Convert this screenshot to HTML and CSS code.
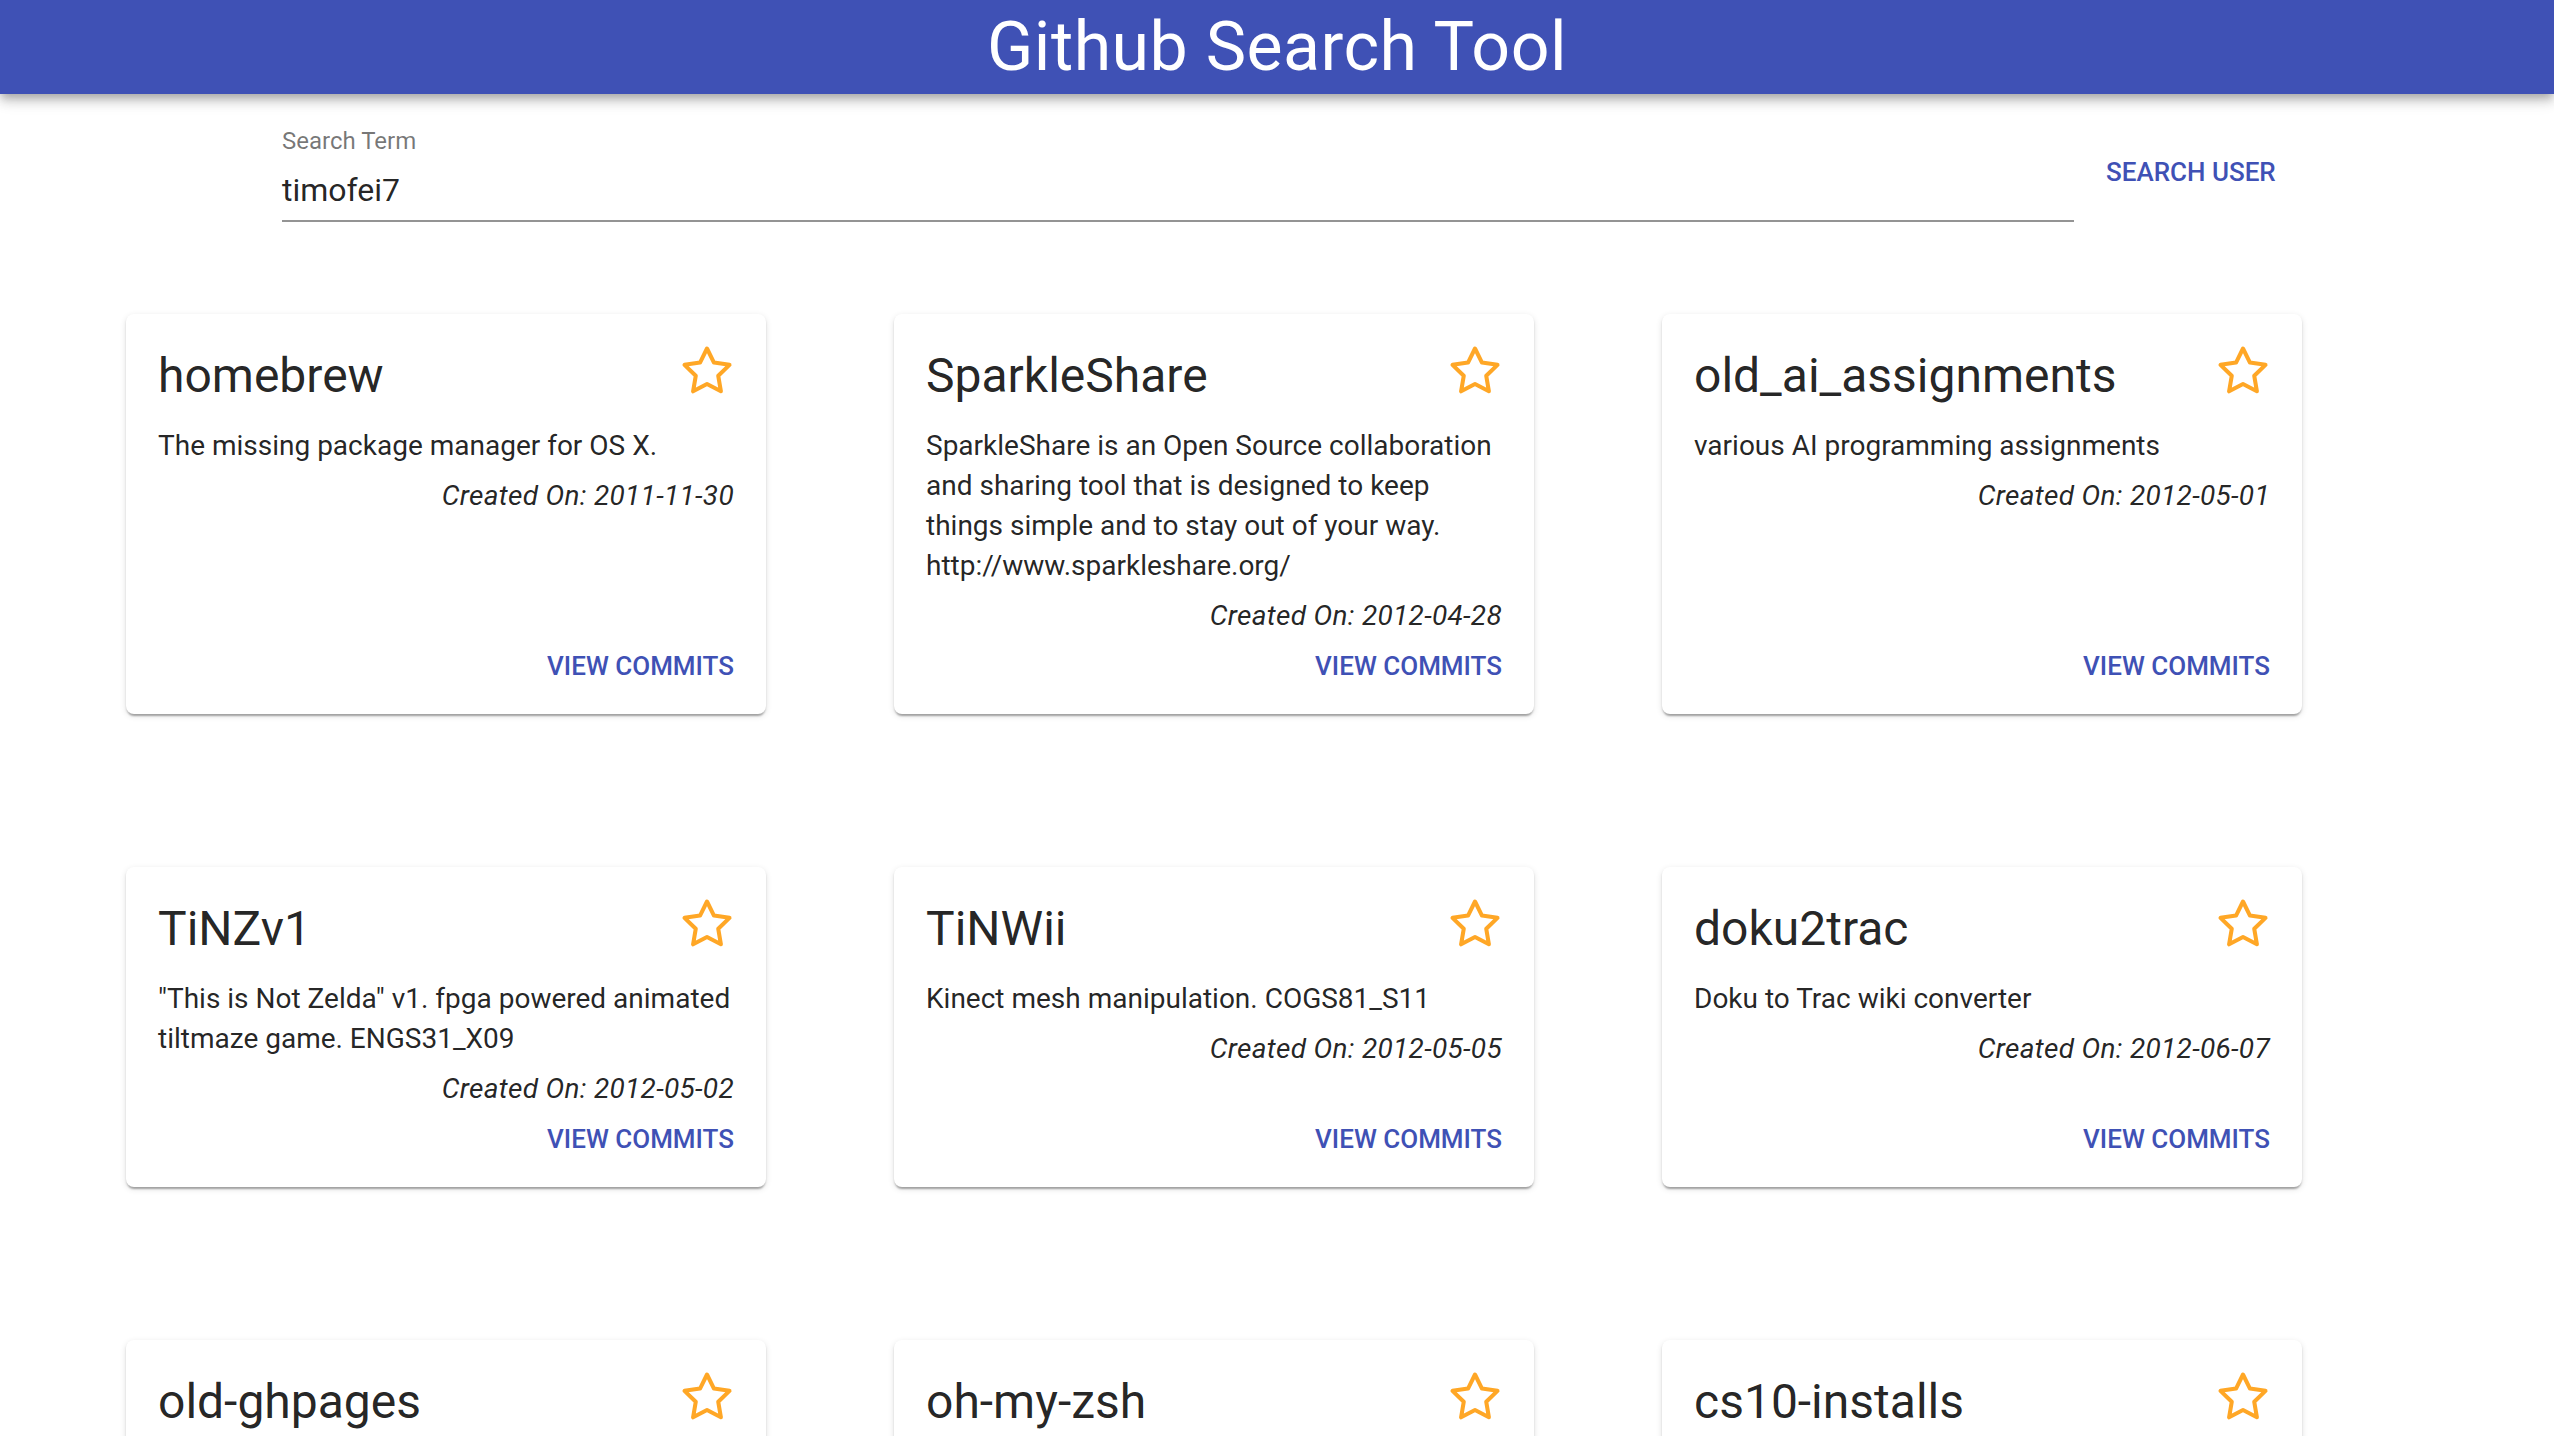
FILE: index.html
```html
<!DOCTYPE html>
<html lang="en">
<head>
<meta charset="utf-8">
<title>Github Search Tool</title>
<link rel="stylesheet" href="styles.css">
</head>
<body>
<header class="appbar">
  <h1 class="app-title">Github Search Tool</h1>
</header>
<main class="page">
  <div class="search-row">
    <div class="field">
      <label class="field-label">Search Term</label>
      <div class="field-input">timofei7</div>
    </div>
    <button class="text-btn search-btn">SEARCH USER</button>
  </div>

  <div class="grid">
    <div class="card">
      <div class="card-content">
        <div class="card-head"><h2 class="card-title">homebrew</h2><svg class="star" viewBox="0 0 24 24"><polygon points="12 2 15.09 8.26 22 9.27 17 14.14 18.18 21.02 12 17.77 5.82 21.02 7 14.14 2 9.27 8.91 8.26 12 2"/></svg></div>
        <p class="card-desc">The missing package manager for OS X.</p>
        <p class="card-date">Created On: 2011-11-30</p>
      </div>
      <div class="card-actions"><button class="text-btn">VIEW COMMITS</button></div>
    </div>
    <div class="card">
      <div class="card-content">
        <div class="card-head"><h2 class="card-title">SparkleShare</h2><svg class="star" viewBox="0 0 24 24"><polygon points="12 2 15.09 8.26 22 9.27 17 14.14 18.18 21.02 12 17.77 5.82 21.02 7 14.14 2 9.27 8.91 8.26 12 2"/></svg></div>
        <p class="card-desc">SparkleShare is an Open Source collaboration and sharing tool that is designed to keep things simple and to stay out of your way. http://www.sparkleshare.org/</p>
        <p class="card-date">Created On: 2012-04-28</p>
      </div>
      <div class="card-actions"><button class="text-btn">VIEW COMMITS</button></div>
    </div>
    <div class="card">
      <div class="card-content">
        <div class="card-head"><h2 class="card-title">old_ai_assignments</h2><svg class="star" viewBox="0 0 24 24"><polygon points="12 2 15.09 8.26 22 9.27 17 14.14 18.18 21.02 12 17.77 5.82 21.02 7 14.14 2 9.27 8.91 8.26 12 2"/></svg></div>
        <p class="card-desc">various AI programming assignments</p>
        <p class="card-date">Created On: 2012-05-01</p>
      </div>
      <div class="card-actions"><button class="text-btn">VIEW COMMITS</button></div>
    </div>

    <div class="card">
      <div class="card-content">
        <div class="card-head"><h2 class="card-title">TiNZv1</h2><svg class="star" viewBox="0 0 24 24"><polygon points="12 2 15.09 8.26 22 9.27 17 14.14 18.18 21.02 12 17.77 5.82 21.02 7 14.14 2 9.27 8.91 8.26 12 2"/></svg></div>
        <p class="card-desc">"This is Not Zelda" v1. fpga powered animated tiltmaze game. ENGS31_X09</p>
        <p class="card-date">Created On: 2012-05-02</p>
      </div>
      <div class="card-actions"><button class="text-btn">VIEW COMMITS</button></div>
    </div>
    <div class="card">
      <div class="card-content">
        <div class="card-head"><h2 class="card-title">TiNWii</h2><svg class="star" viewBox="0 0 24 24"><polygon points="12 2 15.09 8.26 22 9.27 17 14.14 18.18 21.02 12 17.77 5.82 21.02 7 14.14 2 9.27 8.91 8.26 12 2"/></svg></div>
        <p class="card-desc">Kinect mesh manipulation. COGS81_S11</p>
        <p class="card-date">Created On: 2012-05-05</p>
      </div>
      <div class="card-actions"><button class="text-btn">VIEW COMMITS</button></div>
    </div>
    <div class="card">
      <div class="card-content">
        <div class="card-head"><h2 class="card-title">doku2trac</h2><svg class="star" viewBox="0 0 24 24"><polygon points="12 2 15.09 8.26 22 9.27 17 14.14 18.18 21.02 12 17.77 5.82 21.02 7 14.14 2 9.27 8.91 8.26 12 2"/></svg></div>
        <p class="card-desc">Doku to Trac wiki converter</p>
        <p class="card-date">Created On: 2012-06-07</p>
      </div>
      <div class="card-actions"><button class="text-btn">VIEW COMMITS</button></div>
    </div>

    <div class="card">
      <div class="card-content">
        <div class="card-head"><h2 class="card-title">old-ghpages</h2><svg class="star" viewBox="0 0 24 24"><polygon points="12 2 15.09 8.26 22 9.27 17 14.14 18.18 21.02 12 17.77 5.82 21.02 7 14.14 2 9.27 8.91 8.26 12 2"/></svg></div>
        <p class="card-desc">My old github pages site</p>
        <p class="card-date">Created On: 2012-06-20</p>
      </div>
      <div class="card-actions"><button class="text-btn">VIEW COMMITS</button></div>
    </div>
    <div class="card">
      <div class="card-content">
        <div class="card-head"><h2 class="card-title">oh-my-zsh</h2><svg class="star" viewBox="0 0 24 24"><polygon points="12 2 15.09 8.26 22 9.27 17 14.14 18.18 21.02 12 17.77 5.82 21.02 7 14.14 2 9.27 8.91 8.26 12 2"/></svg></div>
        <p class="card-desc">A community-driven framework for managing your zsh configuration.</p>
        <p class="card-date">Created On: 2012-07-10</p>
      </div>
      <div class="card-actions"><button class="text-btn">VIEW COMMITS</button></div>
    </div>
    <div class="card">
      <div class="card-content">
        <div class="card-head"><h2 class="card-title">cs10-installs</h2><svg class="star" viewBox="0 0 24 24"><polygon points="12 2 15.09 8.26 22 9.27 17 14.14 18.18 21.02 12 17.77 5.82 21.02 7 14.14 2 9.27 8.91 8.26 12 2"/></svg></div>
        <p class="card-desc">Install scripts for cs10</p>
        <p class="card-date">Created On: 2012-09-12</p>
      </div>
      <div class="card-actions"><button class="text-btn">VIEW COMMITS</button></div>
    </div>
  </div>
</main>
</body>
</html>
```
FILE: styles.css
```css
* { box-sizing: border-box; }

html, body {
  margin: 0;
  padding: 0;
  background: #ffffff;
  font-family: Roboto, "Liberation Sans", Arial, sans-serif;
  color: rgba(0, 0, 0, 0.87);
}

.appbar {
  position: relative;
  z-index: 2;
  height: 94px;
  background: #3f51b5;
  box-shadow: 0 4px 8px -2px rgba(0,0,0,0.2), 0 8px 10px 0 rgba(0,0,0,0.14), 0 2px 20px 0 rgba(0,0,0,0.12);
  display: flex;
  align-items: center;
  justify-content: center;
}

.app-title {
  margin: 0;
  color: #ffffff;
  font-size: 68px;
  font-weight: 400;
  line-height: 94px;
  letter-spacing: 0.5px;
}

.page {
  padding-bottom: 120px;
}

.search-row {
  display: flex;
  align-items: flex-start;
  gap: 16px;
  padding: 35px 0 0 282px;
}

.field {
  flex: 0 0 1792px;
  display: flex;
  flex-direction: column;
}

.field-label {
  font-size: 24px;
  line-height: 24px;
  color: rgba(0, 0, 0, 0.54);
}

.field-input {
  margin-top: 18px;
  font-size: 32px;
  line-height: 38px;
  padding-bottom: 11px;
  border-bottom: 2px solid #949494;
  color: rgba(0, 0, 0, 0.87);
}

.text-btn {
  border: 0;
  background: transparent;
  font-family: Roboto, "Liberation Sans", Arial, sans-serif;
  font-weight: 500;
  font-size: 26px;
  line-height: 49px;
  letter-spacing: 0;
  color: #3f51b5;
  padding: 0 16px;
  border-radius: 8px;
  cursor: pointer;
}

.search-btn {
  margin-top: 19px;
}

.grid {
  display: grid;
  grid-template-columns: repeat(3, 640px);
  column-gap: 128px;
  row-gap: 153px;
  padding: 92px 0 0 126px;
}

.card {
  display: flex;
  flex-direction: column;
  background: #ffffff;
  border-radius: 8px;
  box-shadow: 0 4px 2px -2px rgba(0,0,0,0.2), 0 2px 2px 0 rgba(0,0,0,0.14), 0 2px 6px 0 rgba(0,0,0,0.12);
}

.card-content {
  flex: 1;
  padding: 32px 32px 0;
}

.card-head {
  display: flex;
  justify-content: space-between;
  align-items: flex-start;
  height: 59px;
}

.card-title {
  margin: 0;
  font-size: 48px;
  font-weight: 400;
  line-height: 59px;
  color: rgba(0, 0, 0, 0.87);
}

.star {
  width: 54px;
  height: 54px;
  margin-top: -2px;
  fill: none;
  stroke: #ffa726;
  stroke-width: 1.8;
  stroke-linejoin: round;
  flex: none;
}

.card-desc {
  margin: 21px 0 0;
  font-size: 28px;
  line-height: 40px;
  letter-spacing: 0;
}

.card-date {
  margin: 10px 0 0;
  font-size: 28px;
  line-height: 40px;
  font-style: italic;
  text-align: right;
  letter-spacing: 0.3px;
}

.card-actions {
  display: flex;
  justify-content: flex-end;
  padding: 6px 16px 23px;
}
```
